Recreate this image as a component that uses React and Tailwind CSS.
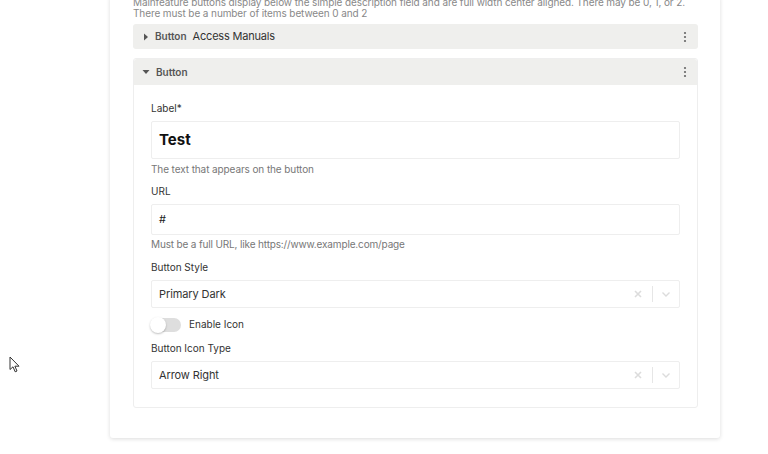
import React from "react";

function Kebab() {
  return (
    <svg width="4" height="12" viewBox="0 0 4 12" className="block">
      <circle cx="2" cy="2" r="1.1" fill="#666" />
      <circle cx="2" cy="6" r="1.1" fill="#666" />
      <circle cx="2" cy="10" r="1.1" fill="#666" />
    </svg>
  );
}

function SelectBox({ value }) {
  return (
    <div className="flex h-[28px] items-center rounded-[2px] border border-[#eeeeee] bg-white pl-[7px]">
      <span className="flex-1 text-[11px] tracking-[-0.1px] text-[#333]">{value}</span>
      <svg width="10" height="10" viewBox="0 0 10 10" className="mr-[9px]">
        <path d="M2 2L8 8M8 2L2 8" stroke="#dcdcdc" strokeWidth="1.6" />
      </svg>
      <div className="h-[16px] w-px bg-[#e6e6e6]" />
      <svg width="10" height="10" viewBox="0 0 10 10" className="mx-[8px]">
        <path d="M1.5 3.5L5 7L8.5 3.5" stroke="#dcdcdc" strokeWidth="1.4" fill="none" />
      </svg>
    </div>
  );
}

export default function App() {
  return (
    <div
      className="relative h-[454px] w-[768px] overflow-hidden bg-white"
      style={{ fontFamily: "Inter, 'Noto Sans', sans-serif" }}
    >
      <svg
        width="12"
        height="18"
        viewBox="0 0 12 18"
        className="absolute left-[9px] top-[356px]"
      >
        <path
          d="M1 1 L1 13.5 L4 10.8 L6.2 15.8 L8 15 L5.9 10.2 L10 10.2 Z"
          fill="white"
          stroke="#333"
          strokeWidth="1"
          strokeLinejoin="round"
        />
      </svg>
      <div className="ml-[110px] mt-[-3px] w-[610px] rounded-b-[3px] bg-white pb-[30px] pl-[23px] pr-[22px] shadow-[0_1px_4px_rgba(0,0,0,0.14)]">
        <p className="text-[10px] leading-[11px] tracking-[-0.1px] text-[#888]">
          Mainfeature buttons display below the simple description field and are full width center aligned. There may be 0, 1, or 2.
          <br />
          There must be a number of items between 0 and 2
        </p>
        <div className="mt-[5px] flex h-[25px] items-center rounded-[3px] bg-[#efefed] pl-[10px] pr-[11px]">
          <svg width="6" height="8" viewBox="0 0 6 8" className="mr-[6px]">
            <path d="M1 0.5L5 4L1 7.5Z" fill="#555" />
          </svg>
          <span className="text-[10px] font-semibold text-[#555]">Button</span>
          <span className="ml-[6px] text-[11px] tracking-[-0.2px] text-[#333]">Access Manuals</span>
          <div className="flex-1" />
          <Kebab />
        </div>
        <div className="mt-[9px] rounded-[3px] border border-[#eeeeee]">
          <div className="flex h-[26px] items-center rounded-t-[3px] bg-[#efefed] pl-[8px] pr-[10px]">
            <svg width="8" height="6" viewBox="0 0 8 6" className="mr-[6px]">
              <path d="M0.5 1L7.5 1L4 5Z" fill="#555" />
            </svg>
            <span className="text-[10px] font-semibold text-[#555]">Button</span>
            <div className="flex-1" />
            <Kebab />
          </div>
          <div className="px-[17px] pb-[18px] pt-[16px]">
            <div className="text-[10px] leading-[14px] text-[#333]">Label*</div>
            <div className="mt-[6px] flex h-[38px] items-center rounded-[2px] border border-[#eeeeee] pl-[7px]">
              <span className="text-[15px] font-bold text-[#111]">Test</span>
            </div>
            <div className="mt-[3px] text-[10px] leading-[14px] tracking-[-0.1px] text-[#777]">The text that appears on the button</div>
            <div className="mt-[8px] text-[10px] leading-[14px] text-[#333]">URL</div>
            <div className="mt-[6px] flex h-[31px] items-center rounded-[2px] border border-[#eeeeee] pl-[7px]">
              <span className="text-[11px] text-[#222]">#</span>
            </div>
            <div className="mt-[2px] text-[10px] leading-[14px] tracking-[-0.15px] text-[#777]">Must be a full URL, like https://www.example.com/page</div>
            <div className="mt-[9px] text-[10px] leading-[14px] text-[#333]">Button Style</div>
            <div className="mt-[6px]">
              <SelectBox value="Primary Dark" />
            </div>
            <div className="mt-[9px] flex items-center">
              <div className="relative h-[14px] w-[30px] rounded-full bg-[#dedede]">
                <div className="absolute left-[-1px] top-[-1px] h-[16px] w-[16px] rounded-full bg-white shadow-[0_1px_2px_rgba(0,0,0,0.25)]" />
              </div>
              <span className="ml-[8px] text-[10px] text-[#333]">Enable Icon</span>
            </div>
            <div className="mt-[9px] text-[10px] leading-[14px] text-[#333]">Button Icon Type</div>
            <div className="mt-[6px]">
              <SelectBox value="Arrow Right" />
            </div>
          </div>
        </div>
      </div>
    </div>
  );
}
